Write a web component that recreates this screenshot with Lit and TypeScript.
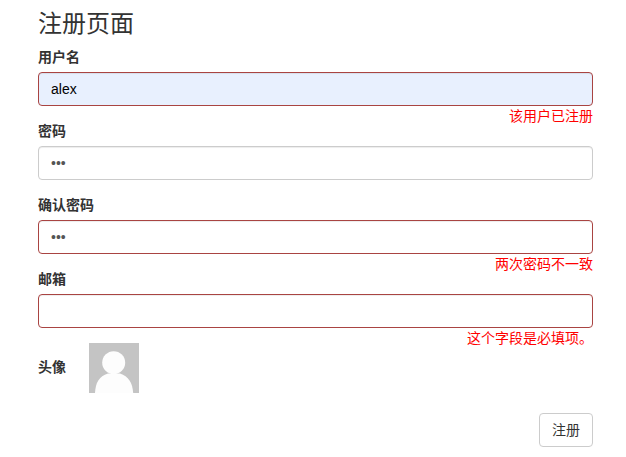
import { LitElement, html, css } from "lit";
import { customElement } from "lit/decorators.js";

@customElement("app-root")
export class AppRoot extends LitElement {
  static styles = css`
    :host {
      display: block;
      font-family: "Liberation Sans", "Noto Sans CJK SC", sans-serif;
      font-size: 14px;
      line-height: 20px;
      color: #333;
    }
    form {
      display: flex;
      flex-direction: column;
      padding: 11px 33px 10px 38px;
    }
    h3 {
      margin: 0 0 10px;
      font-size: 24px;
      font-weight: 400;
      line-height: 26px;
      color: #333;
    }
    .group {
      margin-bottom: 15px;
    }
    label {
      display: block;
      margin-bottom: 5px;
      font-weight: 700;
    }
    input {
      display: block;
      box-sizing: border-box;
      width: 100%;
      height: 34px;
      padding: 6px 12px;
      font: inherit;
      color: #555;
      background: #fff;
      border: 1px solid #ccc;
      border-radius: 4px;
      box-shadow: inset 0 1px 1px rgba(0, 0, 0, 0.075);
      outline: none;
    }
    input.invalid {
      border-color: #a94442;
    }
    input.filled {
      background: #e8f0fe;
      color: #000;
    }
    .error {
      margin-bottom: -20px;
      color: #f00;
      text-align: right;
    }
    .avatar-row {
      display: flex;
      align-items: center;
      gap: 23px;
      margin-bottom: 20px;
    }
    .avatar-row label {
      margin: 0 0 2px;
    }
    .avatar {
      display: block;
      width: 50px;
      height: 50px;
    }
    .actions {
      display: flex;
      justify-content: flex-end;
    }
    button {
      box-sizing: border-box;
      height: 34px;
      padding: 6px 12px;
      font: inherit;
      color: #333;
      background: #fff;
      border: 1px solid #ccc;
      border-radius: 4px;
    }
  `;

  render() {
    return html`
      <form>
        <h3>注册页面</h3>
        <div class="group">
          <label>用户名</label>
          <input class="invalid filled" type="text" .value=${"alex"} />
          <div class="error">该用户已注册</div>
        </div>
        <div class="group">
          <label>密码</label>
          <input type="password" .value=${"123"} />
        </div>
        <div class="group">
          <label>确认密码</label>
          <input class="invalid" type="password" .value=${"123"} />
          <div class="error">两次密码不一致</div>
        </div>
        <div class="group">
          <label>邮箱</label>
          <input class="invalid" type="text" />
          <div class="error">这个字段是必填项。</div>
        </div>
        <div class="avatar-row">
          <label>头像</label>
          <svg class="avatar" viewBox="0 0 50 50" role="img" aria-label="默认头像">
            <rect width="50" height="50" fill="#c4c4c4" />
            <circle cx="24.7" cy="19.7" r="11.5" fill="#fdfdfd" />
            <path d="M6 50 C6.5 40 10 33 19 30.5 L31 30.5 C39.5 33 43.5 40 44.2 50 Z" fill="#fdfdfd" />
          </svg>
        </div>
        <div class="actions"><button type="button">注册</button></div>
      </form>
    `;
  }
}
